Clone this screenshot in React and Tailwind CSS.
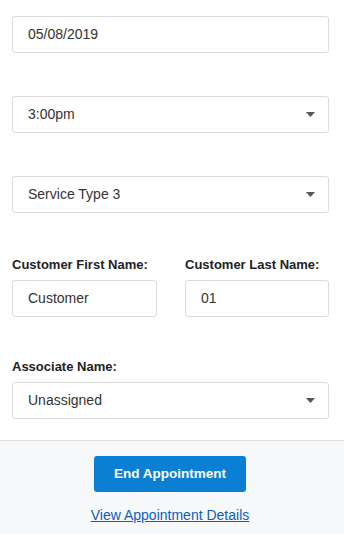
import React from 'react';

function Caret() {
  return (
    <svg width="9" height="5" viewBox="0 0 9 5" className="shrink-0">
      <path d="M0 0 L9 0 L4.5 5 Z" fill="#555" />
    </svg>
  );
}

function Field({ value, select, className = '' }) {
  return (
    <div
      className={`h-[37px] flex items-center justify-between pl-[15px] pr-[13px] bg-white border border-[#dcdcdc] rounded-[3px] text-[14px] text-[#333] ${className}`}
    >
      <span>{value}</span>
      {select && <Caret />}
    </div>
  );
}

function Label({ children }) {
  return <div className="text-[13px] font-bold text-[#222] leading-4 mb-[7px]">{children}</div>;
}

export default function App() {
  return (
    <div className="w-[344px] h-[534px] bg-white flex flex-col" style={{ fontFamily: '"Liberation Sans", Arial, sans-serif' }}>
      <div className="pl-3 pr-[15px] pt-4 flex flex-col">
        <Field value="05/08/2019" />
        <Field value="3:00pm" select className="mt-[43px]" />
        <Field value="Service Type 3" select className="mt-[43px]" />

        <div className="mt-[44px] flex gap-[28px]">
          <div className="w-[145px]">
            <Label>Customer First Name:</Label>
            <Field value="Customer" />
          </div>
          <div className="flex-1">
            <Label>Customer Last Name:</Label>
            <Field value="01" />
          </div>
        </div>

        <div className="mt-[42px]">
          <Label>Associate Name:</Label>
          <Field value="Unassigned" select />
        </div>
      </div>

      <div className="mt-[21px] flex-1 border-t border-[#dcdcdc] bg-[#f7f8fa] flex flex-col items-center pt-[15px] pr-[4px]">
        <button className="w-[152px] h-[36px] rounded-[3px] bg-[#0a7fd4] text-white text-[13.5px] font-bold">
          End Appointment
        </button>
        <a href="#" className="mt-[13px] text-[14px] text-[#0a5fc0] underline">
          View Appointment Details
        </a>
      </div>
    </div>
  );
}
